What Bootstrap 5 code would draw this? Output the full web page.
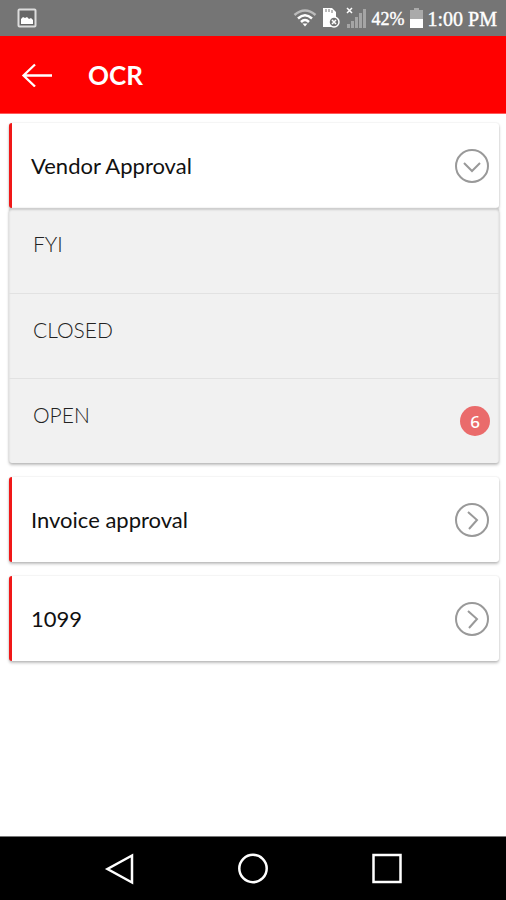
<!DOCTYPE html>
<html lang="en">
<head>
<meta charset="utf-8">
<meta name="viewport" content="width=device-width, initial-scale=1">
<title>OCR</title>
<link href="https://cdn.jsdelivr.net/npm/bootstrap@5.3.0/dist/css/bootstrap.min.css" rel="stylesheet">
<style>
body { font-family: Lato, "Liberation Sans", sans-serif; background: #fff; color: #111; }
.status-bar { height: 36px; background: #757575; color: #fff; padding: 0 9px 0 17px; font: 400 18px/36px "Liberation Serif", serif; -webkit-text-stroke: 0.4px #fff; }
.status-icons { gap: 5px; }
.status-text { padding-top: 2px; }
.clock { font-size: 20px; }
.app-bar { height: 78px; background: #f00; color: #fff; padding: 0 19px; gap: 35px; border-bottom: 1px solid #ff5a5a; }
.app-title { font-size: 26px; line-height: 32px; font-weight: 700; }
.plain-btn { background: none; border: 0; padding: 0; color: inherit; display: block; line-height: 0; }
.menu-list { padding: 9px 7px 0 9px; }
.menu-head { height: 85px; width: 100%; background: #fff; border: 0; border-left: 3px solid #f01818; border-radius: 3px; padding: 0 10px 0 19px; font-size: 22px; line-height: 28px; color: #111; box-shadow: 0 2px 3px rgba(0,0,0,.25), 0 0 2px rgba(0,0,0,.12); }
.menu-gap { margin-top: 14px; }
.sub-list { background: #f1f1f1; border-radius: 3px; box-shadow: 0 2px 3px rgba(0,0,0,.25), 0 0 2px rgba(0,0,0,.12), inset 0 2px 2px rgba(0,0,0,.15); }
.sub-row { height: 85px; padding: 22px 9px 0 24px; font-size: 21px; line-height: 28px; font-weight: 300; color: #222; text-decoration: none; }
.sub-row + .sub-row { border-top: 1px solid #e2e2e2; }
.count-dot { width: 30px; height: 30px; margin-top: 5px; background: #ea6b6b; color: #fff; font: 500 17px/31px "Noto Sans", sans-serif; text-align: center; }
.nav-keys { height: 64px; background: #000; color: #fff; border-top: 1px solid #777; }
</style>
</head>
<body class="min-vh-100 d-flex flex-column">
<header>
  <div class="status-bar d-flex justify-content-between align-items-center">
    <svg width="20" height="20" viewBox="0 0 20 20" aria-hidden="true"><rect x="1.5" y="1.5" width="17" height="17" rx="1" fill="#666" stroke="#ddd" stroke-width="2"/><path d="M4 16v-5l2-2 2 1 2-1 2 2 2-1 2 2v4z" fill="#fff"/></svg>
    <div class="status-icons d-flex align-items-center">
      <svg width="24" height="20" viewBox="0 0 24 20" fill="none" stroke-width="2.500" aria-hidden="true"><path d="M1.500 7Q12-2 22.500 7" stroke="#bbb"/><path d="M5 10.500Q12 4 19 10.500M8 14q4-4 8 0" stroke="#fff"/><path d="M9.500 15.500h5L12 18.500z" fill="#fff"/></svg>
      <svg width="18" height="22" viewBox="0 0 18 22" aria-hidden="true"><path d="M1 1h9l4 4v15H1z" fill="#fff"/><path d="M4 2v3M7 2v3M10 3v3" stroke="#777"/><circle cx="12" cy="15" r="5" fill="#757575" stroke="#fff" stroke-width="1.500"/><path d="M10 13l4 4m0-4l-4 4" stroke="#fff" stroke-width="1.500"/></svg>
      <svg width="22" height="22" viewBox="0 0 22 22" aria-hidden="true"><path d="M2 1l5 5m0-5L2 6" stroke="#fff" stroke-width="1.500"/><path d="M2 17h3v4H2zM6 14h3v7H6zM10 10h3v11h-3zM14 6h3v15h-3zM18 2h3v19h-3z" fill="#a5a5a5"/></svg>
      <span class="status-text">42%</span>
      <svg width="13" height="20" viewBox="0 0 13 20" aria-hidden="true"><path d="M4 0h5v2h4v9H0V2h4z" fill="#aaa"/><path d="M0 11h13v9H0z" fill="#fff"/></svg>
      <span class="status-text clock">1:00 PM</span>
    </div>
  </div>
  <div class="app-bar d-flex align-items-center">
    <button class="plain-btn" type="button" aria-label="Back"><svg width="34" height="24" viewBox="0 0 34 24" fill="none" stroke="currentColor" stroke-width="2.300" aria-hidden="true"><path d="M33 12.500H4M16 1.500L4.500 12.500 16 23.500"/></svg></button>
    <h1 class="app-title m-0">OCR</h1>
  </div>
</header>
<main class="menu-list flex-grow-1">
  <button class="menu-head d-flex align-items-center justify-content-between" type="button" data-bs-toggle="collapse" data-bs-target="#vendor" aria-expanded="true" aria-controls="vendor">
    <span>Vendor Approval</span>
    <svg width="34" height="34" viewBox="0 0 34 34" fill="none" stroke="#999" stroke-width="2" aria-hidden="true"><circle cx="17" cy="17" r="16"/><path d="M9 14l8 8 8-8"/></svg>
  </button>
  <div class="collapse show" id="vendor">
    <nav class="sub-list" aria-label="Vendor Approval">
      <a class="sub-row d-flex justify-content-between align-items-start" href="#fyi">FYI</a>
      <a class="sub-row d-flex justify-content-between align-items-start" href="#closed">CLOSED</a>
      <a class="sub-row d-flex justify-content-between align-items-start" href="#open">OPEN <span class="count-dot rounded-circle">6</span></a>
    </nav>
  </div>
  <button class="menu-head menu-gap d-flex align-items-center justify-content-between" type="button">
    <span>Invoice approval</span>
    <svg width="34" height="34" viewBox="0 0 34 34" fill="none" stroke="#999" stroke-width="2" aria-hidden="true"><circle cx="17" cy="17" r="16"/><path d="M13 9l9 8-8 9"/></svg>
  </button>
  <button class="menu-head menu-gap d-flex align-items-center justify-content-between" type="button">
    <span>1099</span>
    <svg width="34" height="34" viewBox="0 0 34 34" fill="none" stroke="#999" stroke-width="2" aria-hidden="true"><circle cx="17" cy="17" r="16"/><path d="M13 9l9 8-8 9"/></svg>
  </button>
</main>
<footer class="nav-keys d-flex justify-content-evenly align-items-center">
  <button class="plain-btn" type="button" aria-label="Back"><svg width="30" height="32" viewBox="0 0 30 32" fill="none" stroke="currentColor" stroke-width="2.500" aria-hidden="true"><path d="M28 2.500v27L3.500 16z"/></svg></button>
  <button class="plain-btn" type="button" aria-label="Home"><svg width="30" height="32" viewBox="0 0 30 32" fill="none" stroke="currentColor" stroke-width="2.500" aria-hidden="true"><circle cx="15" cy="15.500" r="13.700"/></svg></button>
  <button class="plain-btn" type="button" aria-label="Recent apps"><svg width="30" height="32" viewBox="0 0 30 32" fill="none" stroke="currentColor" stroke-width="2.500" aria-hidden="true"><path d="M1.500 2h27v27h-27z"/></svg></button>
</footer>
<script src="https://cdn.jsdelivr.net/npm/bootstrap@5.3.0/dist/js/bootstrap.bundle.min.js"></script>
</body>
</html>
